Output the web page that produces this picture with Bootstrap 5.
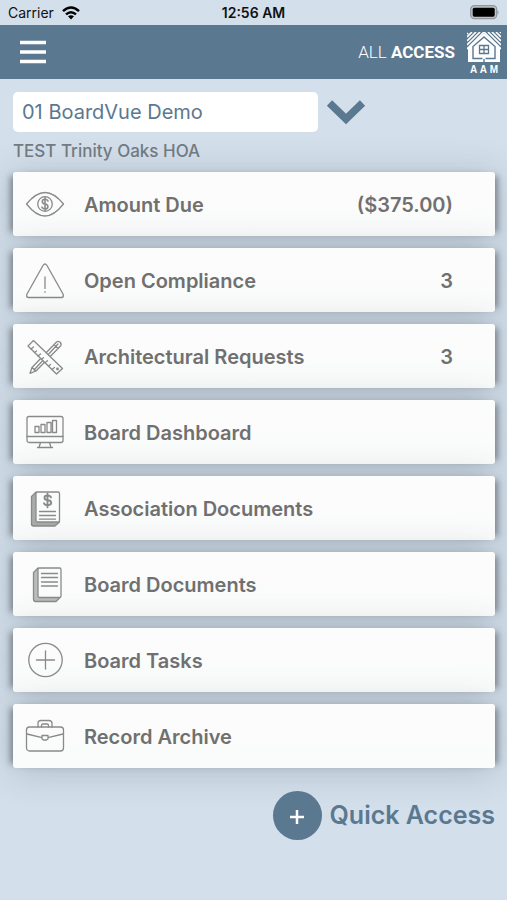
<!DOCTYPE html>
<html lang="en">
<head>
<meta charset="utf-8">
<meta name="viewport" content="width=device-width, initial-scale=1">
<title>All Access</title>
<link href="https://cdn.jsdelivr.net/npm/bootstrap@5.3.0/dist/css/bootstrap.min.css" rel="stylesheet">
<style>
  :root { --steel: #5b7891; --sky: #d3dfeb; }
  body { font-family: Inter, "Liberation Sans", sans-serif; background: var(--sky); color: #666; }
  .status { height: 25px; padding: 0 8px; font-size: 14px; line-height: 26px; color: #111; }
  .status .clock { font-weight: 600; }
  .topbar { height: 54px; padding: 0 6px 0 16px; background: var(--steel); }
  .brand { font-family: Roboto, "Liberation Sans", sans-serif; font-size: 17px; line-height: 24px; gap: 12px; }
  .brand-light { font-weight: 300; }
  .brand-mark { font: 700 10px/10px "Liberation Sans", sans-serif; padding-top: 2px; }
  .brand-word { width: 28px; padding-top: 3px; }
  .screen { padding: 13px 12px 0 13px; }
  .picker-box { width: 305px; max-width: 80%; }
  .picker-box .form-control { height: 40px; padding: 0 9px; border: 0; border-radius: 5px; font-size: 20px; color: var(--steel); }
  .assoc { font-size: 17px; line-height: 20px; font-weight: 500; color: #747b82; margin: 9px 0 11px; }
  .tiles { gap: 12px; }
  .tile { height: 64px; padding: 1px 42px 0 12px; border-radius: 3px; font-size: 20px; font-weight: 600; color: #707070;
    background: linear-gradient(#fcfcfc, #fafbfb);
    box-shadow: 7px 0 6px -4px rgba(60,66,72,.5), -7px 0 6px -4px rgba(60,66,72,.5), 0 3px 36px rgba(60,70,80,.24); }
  .tile:hover { color: #444; }
  .tile svg { width: 40px; height: 42px; margin-right: 19px; flex: none; fill: none; stroke: #8a8a8a; stroke-width: 1.3; stroke-linejoin: round; stroke-linecap: round; }
  .quick { margin-top: 23px; gap: 8px; font-size: 25px; font-weight: 600; color: var(--steel); }
  .quick-disc { width: 49px; height: 49px; background: var(--steel); }
</style>
</head>
<body>
<div class="status d-flex justify-content-between">
  <div class="d-flex align-items-center gap-2 col"><span>Carrier</span>
    <svg width="18" height="14" viewBox="0 0 18 14" fill="none" stroke="#000" stroke-width="2.5" aria-hidden="true"><path d="M1 5.2Q9-2.2 17 5.2M4 8.4Q9 4 14 8.4"/><path d="M6 10.3Q9 8 12 10.3L9 13.4Z" fill="#000" stroke="none"/></svg>
  </div>
  <div class="clock">12:56 AM</div>
  <div class="col d-flex justify-content-end align-items-center">
    <svg width="30" height="15" viewBox="0 0 30 15" aria-hidden="true"><rect x="1.700" y=".7" width="26" height="13" rx="3.6" fill="#bcc3ca" stroke="#8f969c" stroke-width="1.2"/><rect x="3.700" y="2.7" width="22" height="9" rx="1.6"/><path d="M28.500 5q2 2.300 0 4.600z" fill="#8f969c"/></svg>
  </div>
</div>
<header class="topbar d-flex align-items-center justify-content-between">
  <button class="btn p-1 border-0 d-flex" type="button" aria-label="Menu">
    <svg width="26" height="26" viewBox="0 0 26 26" stroke="#fff" stroke-width="3.6"><path d="M0 3.5h26M0 13h26M0 22.5h26"/></svg>
  </button>
  <div class="brand d-flex align-items-center text-white">
    <div><span class="brand-light">ALL</span> <span class="fw-bold">ACCESS</span></div>
    <div class="brand-mark d-flex flex-column align-items-center">
      <svg width="34" height="30" viewBox="0 0 34 30" aria-hidden="true">
        <g stroke="#fff" stroke-width="1.7"><path d="M1 1l-1 1M5 0L0 5M9 0L0 9M13 0L0 13M17 0L0 17M29 0l5 5M25 0l9 9M21 0l13 13M17 0l17 17M33 0l1 1"/></g>
        <path d="M17 1L1 16v14h32V16z" fill="#fff"/>
        <path d="M15.500 26.500H6V14.500L17 5l11 9.500v12h-9.500M17 27v3" fill="none" stroke="#5b7891" stroke-width="1.400"/>
        <path d="M12.500 13.500h9v8h-9zM17 13.500v8M12.500 17.500h9" fill="none" stroke="#5b7891" stroke-width="1.300"/>
      </svg>
      <div class="brand-word d-flex justify-content-between"><span>A</span><span>A</span><span>M</span></div>
    </div>
  </div>
</header>
<main class="screen">
  <div class="d-flex align-items-center gap-2">
    <div class="picker-box"><input class="form-control" type="text" value="01 BoardVue Demo" aria-label="Community"></div>
    <button class="btn p-0 border-0 d-flex" type="button" aria-label="Show communities">
      <svg width="40" height="25" viewBox="0 0 40 25" fill="none" stroke="#5b7891" stroke-width="7.500"><path d="M3.500 3L20 19L36.500 3"/></svg>
    </button>
  </div>
  <p class="assoc">TEST Trinity Oaks HOA</p>
  <nav class="tiles d-flex flex-column" aria-label="Sections">
    <a href="#" class="tile d-flex align-items-center text-decoration-none">
      <svg viewBox="0 0 40 42"><path d="M1.500 20Q11 8.500 20 8.500T38.500 20Q29 32 20 32T1.500 20z"/><circle cx="20" cy="20" r="7.300"/><path d="M23 17q-1-1.700-3-1.700-2.700 0-2.700 2.200T20 20t2.900 2.400Q22.900 25 20 25q-2.200 0-3.100-1.800M20 13.500v13" stroke-width="1.600"/></svg>
      <span>Amount Due</span><span class="ms-auto">($375.00)</span></a>
    <a href="#" class="tile d-flex align-items-center text-decoration-none">
      <svg viewBox="0 0 40 42"><path d="M18 5.500q2-3 4 0L38 34q1.200 3.500-1.500 3.500h-33Q.8 37.500 2 34z"/><path d="M20 17v11.500M20 31.700v.6"/></svg>
      <span>Open Compliance</span><span class="ms-auto">3</span></a>
    <a href="#" class="tile d-flex align-items-center text-decoration-none">
      <svg viewBox="0 0 40 42"><path d="M7 31.500L31.500 6q1.700-1.500 3.600.3t.4 3.700L11 35l-6 2.300zM7 31.500l4 3.500M9 34L33 8M29 8.500l4 4"/><path d="M8.500 4.500L37.500 32.500l-6 5.500L3 10z" fill="#fafbfb"/><path d="M6 13l2.500-2M9.500 16.500l2-1.600M13 20l2.500-2M16.500 23.300l2-1.600M20 26.700l2.500-2M23.500 30l2-1.600M27 33.500l2.500-2"/><circle cx="32.500" cy="33" r=".8"/></svg>
      <span>Architectural Requests</span><span class="ms-auto">3</span></a>
    <a href="#" class="tile d-flex align-items-center text-decoration-none">
      <svg viewBox="0 0 40 42"><rect x="2" y="4.500" width="36" height="26" rx="2"/><path d="M2 24.500h36M15.500 30.500l-1.500 5h12l-1.500-5M12.500 35.500h15M10 14.500h4v6h-4zM16 12.500h4v8h-4zM22 10.500h4v10h-4zM27.500 8.500h4v12h-4z"/></svg>
      <span>Board Dashboard</span></a>
    <a href="#" class="tile d-flex align-items-center text-decoration-none">
      <svg viewBox="0 0 40 42"><path d="M11 4L6.500 8.500v27.500q0 2 2 2H30l4.500-4z" fill="#aaa"/><rect x="11" y="4" width="23.500" height="30" rx="1.500" fill="#fafbfb"/><path d="M14.500 23.500h16M14.500 27.500h16M14.500 31.200h16"/><path d="M26 9.300Q25 7.500 22.500 7.500q-3 0-3 2.300t3.200 2.400q3.500.3 3.500 2.600t-3.500 2.400q-3 0-3.700-2M22.500 5.500v13.700" stroke-width="1.900"/></svg>
      <span>Association Documents</span></a>
    <a href="#" class="tile d-flex align-items-center text-decoration-none">
      <svg viewBox="0 0 40 42"><path d="M13 4L8.500 8.500V35q0 2.500 2 2.500H31l4.500-4.500z" fill="#bbb"/><rect x="13" y="4" width="23" height="29.500" rx="1.500" fill="#fafbfb"/><path d="M16.500 9.500h16M16.500 13.500h16M16.500 18h16M16.500 22h16"/></svg>
      <span>Board Documents</span></a>
    <a href="#" class="tile d-flex align-items-center text-decoration-none">
      <svg viewBox="0 0 40 42"><circle cx="20.500" cy="20" r="16.700"/><path d="M11.500 20h18M20.500 11v18"/></svg>
      <span>Board Tasks</span></a>
    <a href="#" class="tile d-flex align-items-center text-decoration-none">
      <svg viewBox="0 0 40 42"><rect x="1.500" y="11" width="37" height="24" rx="3"/><path d="M2 18l15 3.700M38 18l-15 3.700M17 19.500h6v3.500l-1.500 1h-3L17 23zM13 11V7.500Q13 4.500 16 4.500h8q3 0 3 3V11M16.500 11v-1.500q0-1.500 1.500-1.500h4q1.500 0 1.500 1.500V11"/></svg>
      <span>Record Archive</span></a>
  </nav>
  <div class="d-flex justify-content-end">
    <button class="quick btn p-0 border-0 d-flex align-items-center" type="button">
      <span class="quick-disc rounded-circle d-flex align-items-center justify-content-center"><svg width="16" height="16" viewBox="0 0 16 16" stroke="#fff" stroke-width="2.500" aria-hidden="true"><path d="M1 9h14M8 2v14"/></svg></span>
      <span>Quick Access</span>
    </button>
  </div>
</main>
<script src="https://cdn.jsdelivr.net/npm/bootstrap@5.3.0/dist/js/bootstrap.bundle.min.js"></script>
</body>
</html>
